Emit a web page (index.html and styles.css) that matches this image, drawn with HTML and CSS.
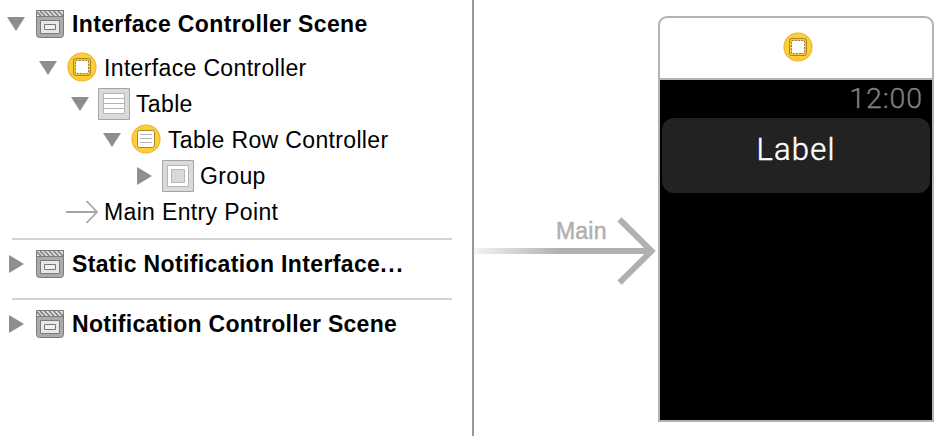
FILE: index.html
```
<!DOCTYPE html>
<html lang="en">
<head>
<meta charset="utf-8">
<title>Interface Storyboard</title>
<link rel="stylesheet" href="styles.css">
</head>
<body>
<svg class="defs" aria-hidden="true">
  <defs>
    <symbol id="scene" viewBox="0 0 28 28">
      <path d="M.5 .5h27v24a3 3 0 0 1-3 3h-21a3 3 0 0 1-3-3z" fill="#ababab" stroke="#7b7b7b"/>
      <path d="M1 1h26v5H1z" fill="#dcdcdc"/>
      <path d="M1 2l4 4M4 1l5 5M8.500 1l5 5M13 1l5 5M17.500 1l5 5M22 1l5 5" stroke="#777" stroke-width="1.300"/>
      <path d="M1 6.500h26" stroke="#7b7b7b"/>
      <path d="M4.500 10.500h19v13h-19z" fill="#e6e8e6" stroke="#7b7b7b"/>
      <path d="M8.500 14.500h11v5h-11z" fill="#f0f0f0" stroke="#777"/>
    </symbol>
    <symbol id="controller" viewBox="0 0 30 30">
      <circle cx="15" cy="15" r="14" fill="#fdcf35" stroke="#edb33b" stroke-width="1.200"/>
      <rect x="6.500" y="6.500" width="17" height="17" rx="2" fill="#f3c83a" stroke="#a8842a"/>
      <path d="M8.500 8.500h13v13h-13z" fill="#fff"/>
      <path d="M8.500 8.500h13v13h-13z" fill="none" stroke="#9b7b28" stroke-dasharray="2 1.250"/>
    </symbol>
    <symbol id="rowcontroller" viewBox="0 0 30 30">
      <circle cx="15" cy="15" r="14" fill="#fdcf35" stroke="#edb33b" stroke-width="1.200"/>
      <rect x="6.500" y="6.500" width="17" height="17" rx="2" fill="#fff" stroke="#a8842a"/>
      <path d="M9 10.500h12M9 14.500h12M9 18.500h12" stroke="#b5b5b5"/>
    </symbol>
    <symbol id="table" viewBox="0 0 32 32">
      <path d="M.5 .5h31v31H.5z" fill="#dadada" stroke="#a5a5a5"/>
      <path d="M5.500 5.500h21v20h-21z" fill="#fff" stroke="#b5b5b5"/>
      <path d="M6 10.500h20M6 15.500h20M6 20.500h20" stroke="#b5b5b5"/>
    </symbol>
    <symbol id="group" viewBox="0 0 32 32">
      <path d="M.5 .5h31v31H.5z" fill="#dadada" stroke="#a5a5a5"/>
      <path d="M5.500 5.500h21v21h-21z" fill="#fff" stroke="#b5b5b5"/>
      <path d="M9.500 9.500h13v13h-13z" fill="#dadada" stroke="#b5b5b5"/>
    </symbol>
    <symbol id="open" viewBox="0 0 18 16"><path d="M0 1h18L9 15z" fill="#8e8e8e"/></symbol>
    <symbol id="closed" viewBox="0 0 18 18"><path d="M1 0v18l15-9z" fill="#8e8e8e"/></symbol>
    <symbol id="entry" viewBox="0 0 32 24"><path d="M0 12h31M20.500 1L31 12 20.500 23" fill="none" stroke="#a5a5a5" stroke-width="1.800"/></symbol>
  </defs>
</svg>
<main class="editor">
  <nav class="outline">
    <section class="scene">
      <div class="row heading"><svg class="toggle"><use href="#open"/></svg><svg class="icon scene-icon"><use href="#scene"/></svg><span>Interface Controller Scene</span></div>
      <div class="children">
        <div class="row level1"><svg class="toggle"><use href="#open"/></svg><svg class="icon round"><use href="#controller"/></svg><span>Interface Controller</span></div>
        <div class="row level2"><svg class="toggle"><use href="#open"/></svg><svg class="icon"><use href="#table"/></svg><span>Table</span></div>
        <div class="row level3"><svg class="toggle"><use href="#open"/></svg><svg class="icon round"><use href="#rowcontroller"/></svg><span>Table Row Controller</span></div>
        <div class="row level4"><svg class="toggle closed"><use href="#closed"/></svg><svg class="icon"><use href="#group"/></svg><span>Group</span></div>
        <div class="row entry"><svg class="icon arrow-icon"><use href="#entry"/></svg><span>Main Entry Point</span></div>
      </div>
    </section>
    <section class="scene divided">
      <div class="row heading"><svg class="toggle closed"><use href="#closed"/></svg><svg class="icon scene-icon"><use href="#scene"/></svg><span>Static Notification Interface<span class="dots">...</span></span></div>
    </section>
    <section class="scene divided last">
      <div class="row heading"><svg class="toggle closed"><use href="#closed"/></svg><svg class="icon scene-icon"><use href="#scene"/></svg><span class="tight">Notification Controller Scene</span></div>
    </section>
  </nav>
  <section class="canvas">
    <div class="entry-point">
      <span class="entry-label">Main</span>
      <svg class="entry-arrow" viewBox="0 0 184 68">
        <defs><linearGradient id="fade" gradientUnits="userSpaceOnUse" x1="0" y1="0" x2="86" y2="0"><stop offset="0" stop-color="#f4f4f4"/><stop offset="1" stop-color="#b0b0b0"/></linearGradient></defs>
        <path d="M0 31h176v6H0z" fill="url(#fade)"/>
        <path d="M145.500 2.300L177.500 34l-32 31.700" fill="none" stroke="#b0b0b0" stroke-width="6"/>
      </svg>
    </div>
    <div class="watch">
      <header class="watch-head"><svg class="icon round"><use href="#controller"/></svg></header>
      <div class="screen">
        <div class="time"><span>12:00</span></div>
        <div class="cell"><span>Label</span></div>
      </div>
    </div>
  </section>
</main>
</body>
</html>
```
FILE: styles.css
```
* { box-sizing: border-box; }
body { margin: 0; background: #fff; color: #000; font-family: "Liberation Sans", Arial, sans-serif; overflow: hidden; }
.defs { position: absolute; width: 0; height: 0; }
.editor { display: flex; width: 950px; height: 436px; }
.outline { width: 474px; flex: none; border-right: 2px solid #979797; padding: 6px 20px 0 0; }
.row { display: flex; align-items: center; height: 36px; padding-left: 7px; font-size: 23px; line-height: 36px; letter-spacing: .35px; white-space: nowrap; }
.heading { font-weight: 700; letter-spacing: .36px; }
.tight { letter-spacing: .28px; }
.dots { letter-spacing: 1.6px; }
.children { padding-top: 8px; }
.level1 { padding-left: 39px; }
.level2 { padding-left: 71px; }
.level3 { padding-left: 103px; }
.level4 { padding-left: 135px; }
.entry { padding-left: 66px; }
.toggle { flex: none; width: 18px; height: 16px; margin-right: 9px; }
.toggle.closed { width: 18px; height: 18px; margin-left: 1px; margin-right: 8px; }
.icon { flex: none; width: 32px; height: 32px; margin-right: 6px; }
.round { width: 30px; height: 30px; margin: 0 7px 2px 1px; }
.scene-icon { width: 28px; height: 28px; margin: 0 8px 0 2px; }
.arrow-icon { height: 24px; }
.divided { margin: 8px 0 0 12px; border-top: 2px solid #d4d4d4; padding-top: 6px; }
.divided .row { margin-left: -12px; }
.last { margin-top: 16px; }
.canvas { display: flex; flex: 1; }
.entry-point { width: 184px; flex: none; padding-top: 217px; position: relative; }
.entry-label { position: absolute; left: 82px; top: 218px; font-size: 23px; line-height: 26px; color: #b0b0b0; letter-spacing: .2px; -webkit-text-stroke: .5px #b0b0b0; }
.entry-arrow { display: block; width: 184px; height: 68px; }
.watch { width: 276px; height: 406px; flex: none; margin-top: 16px; border: 2px solid #b2b2b2; border-radius: 9px 9px 0 0; overflow: hidden; }
.watch-head { height: 62px; border-bottom: 2px solid #b2b2b2; display: flex; align-items: center; justify-content: center; }
.watch-head .icon { margin: 0 0 2px 4px; }
.screen { height: 340px; background: #000; padding: 0 2px; font-family: Roboto, "Liberation Sans", sans-serif; }
.time { height: 38px; text-align: right; padding-right: 7px; font-size: 28.5px; line-height: 37px; font-weight: 300; color: #828282; letter-spacing: .9px; -webkit-text-stroke: .3px #828282; }
.cell { height: 75px; border-radius: 12px; background: #222; color: #fff; text-align: center; font-size: 31px; line-height: 63px; font-weight: 300; letter-spacing: 1.2px; -webkit-text-stroke: .5px #fff; }
```
